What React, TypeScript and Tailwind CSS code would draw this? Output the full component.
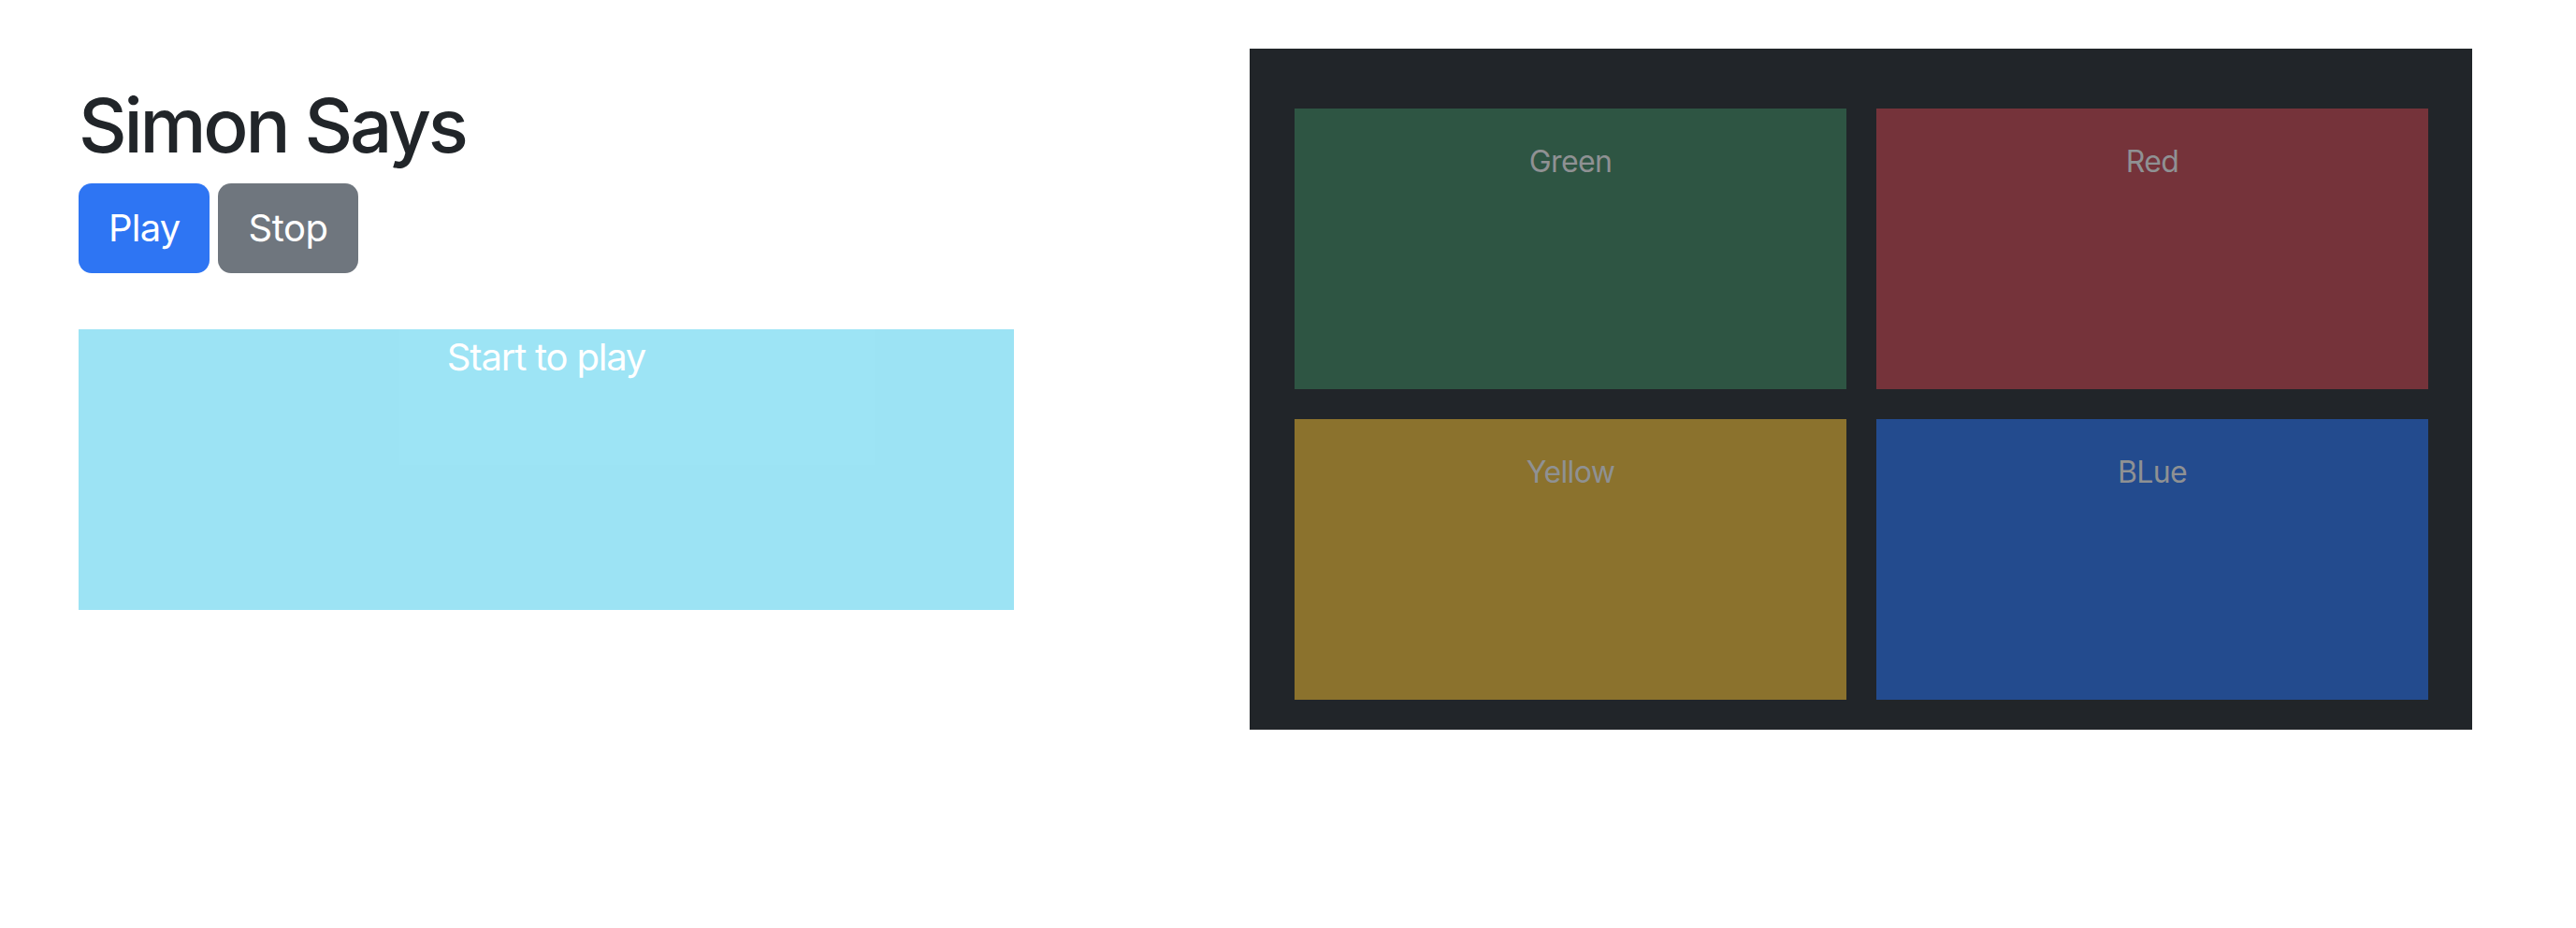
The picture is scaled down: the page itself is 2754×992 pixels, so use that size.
import React from "react"

const tiles = [
  { label: "Green", bg: "bg-[#2e5543]" },
  { label: "Red", bg: "bg-[#75333a]" },
  { label: "Yellow", bg: "bg-[#8b722d]" },
  { label: "BLue", bg: "bg-[#234b8e]" },
]

export default function App() {
  return (
    <div className="flex min-h-[992px] w-[2754px] items-start bg-white pl-[84px] font-['Inter',sans-serif]">
      <div className="flex w-[1000px] flex-col pt-[86px]">
        <h1 className="mb-[14px] text-[80px] font-medium leading-[96px] tracking-[-0.04em] text-[#212529]">
          Simon Says
        </h1>
        <div className="flex gap-[9px]">
          <button className="h-[96px] rounded-[14px] bg-[#2e75f3] px-[32px] text-[40px] leading-[60px] tracking-[-0.02em] text-white">
            Play
          </button>
          <button className="h-[96px] rounded-[14px] bg-[#6f767e] px-[32px] text-[40px] leading-[60px] tracking-[-0.01em] text-white">
            Stop
          </button>
        </div>
        <div className="mt-[60px] grid h-[300px] w-[1000px] grid-cols-1 grid-rows-1 bg-[#9ce3f4]">
          <div className="col-start-1 row-start-1 ml-[343px] h-[145px] w-[509px] bg-[#9de4f5]" />
          <p className="col-start-1 row-start-1 text-center text-[40px] leading-[60px] tracking-[-0.03em] text-white">
            Start to play
          </p>
        </div>
      </div>
      <div className="ml-[252px] mt-[52px] w-[1307px] bg-[#212529] pb-[32px] pl-[48px] pr-[47px] pt-[64px]">
        <div className="grid grid-cols-2 gap-[32px]">
          {tiles.map((t) => (
            <div key={t.label} className={`h-[300px] pt-[33px] text-center ${t.bg}`}>
              <span className="text-[32px] leading-[48px] tracking-[-0.02em] text-[#8f9193]">{t.label}</span>
            </div>
          ))}
        </div>
      </div>
    </div>
  )
}
